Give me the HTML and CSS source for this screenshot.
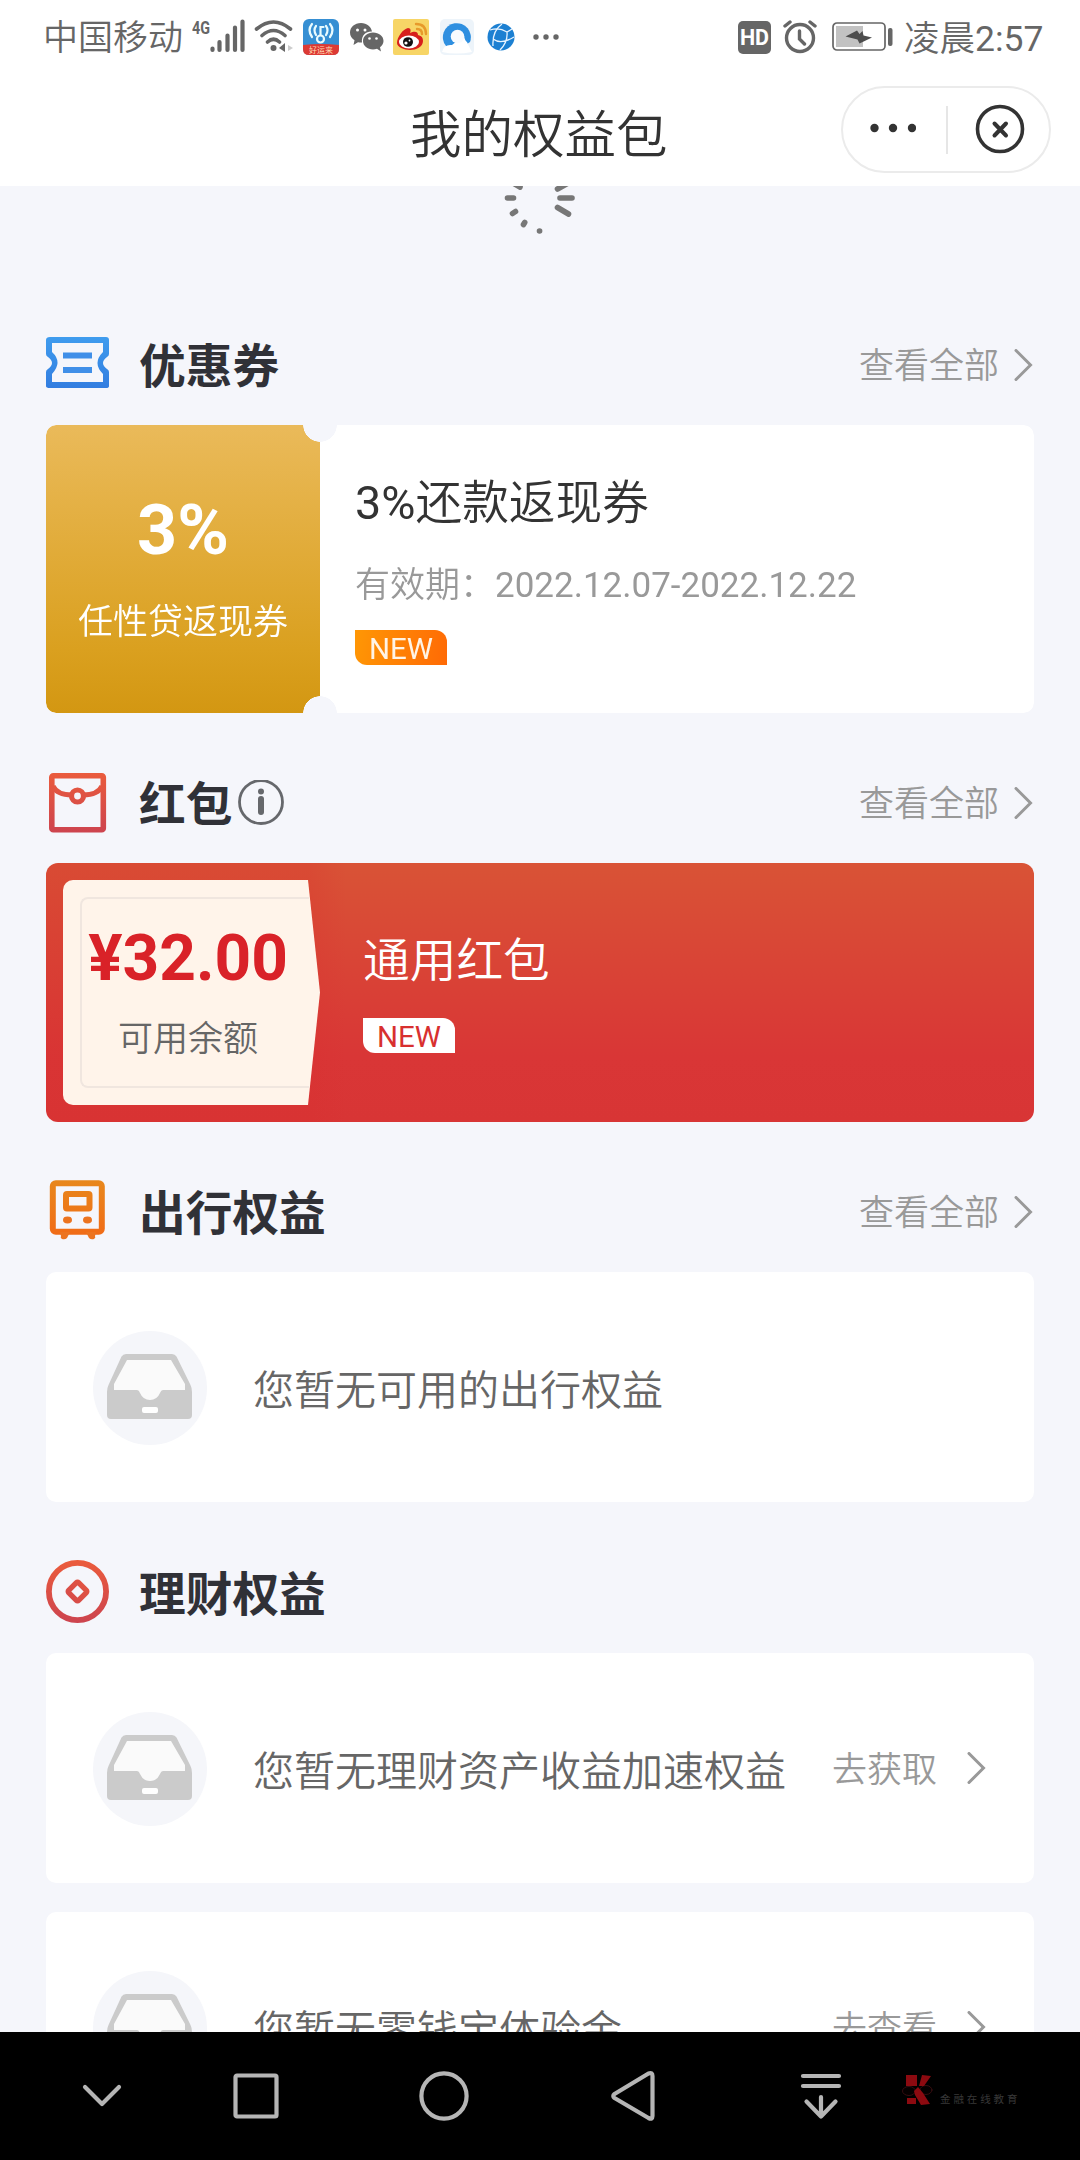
FILE: index.html
```html
<!DOCTYPE html>
<html lang="zh-CN">
<head>
<meta charset="utf-8">
<title>我的权益包</title>
<link rel="stylesheet" href="styles.css">
</head>
<body>
<svg class="defs" width="0" height="0" aria-hidden="true">
  <defs>
    <linearGradient id="blue" x1="0" y1="0" x2="0" y2="1"><stop offset="0" stop-color="#3f9cee"/><stop offset="1" stop-color="#327de0"/></linearGradient>
    <linearGradient id="red" gradientUnits="userSpaceOnUse" x1="0" y1="0" x2="0" y2="64"><stop offset="0" stop-color="#eb5c3c"/><stop offset="1" stop-color="#cc434f"/></linearGradient>
    <linearGradient id="orange" gradientUnits="userSpaceOnUse" x1="0" y1="0" x2="0" y2="64"><stop offset="0" stop-color="#e8881c"/><stop offset="1" stop-color="#f26716"/></linearGradient>
    <symbol id="arrow" viewBox="0 0 20 36"><path d="M2 1.500 16.500 16 2 30.500" fill="none" stroke="#999" stroke-width="3" stroke-linecap="round"/></symbol>
    <symbol id="tray" viewBox="0 0 114 114">
      <circle cx="57" cy="57" r="57" fill="#f5f6fa"/>
      <path d="M33 23H79Q82 23 83.500 25.500L97.500 54Q99 57 99 61V84Q99 88 95 88H18Q14 88 14 84V61Q14 57 15.500 54L28.500 25.500Q30 23 33 23Z" fill="#cbcbcb"/>
      <path d="M34 29H78L92 53V59H70Q68 59 67 62Q64 69 57 69Q50 69 47 62Q46 59 44 59H21V53Z" fill="#fafafa"/>
      <rect x="49" y="76" width="16" height="6" rx="2" fill="#fff"/>
    </symbol>
  </defs>
</svg>

<div class="screen">
  <header class="top">
    <div class="status">
      <span class="carrier">中国移动</span>
      <svg class="signal" width="54" height="40" viewBox="0 0 54 40">
        <text x="0" y="17" class="net" textLength="18" lengthAdjust="spacingAndGlyphs">4G</text>
        <path d="M20.500 33v-1.500M27.500 33v-8M35.500 33V18.500M43 33V10.500M50.500 33V4.500" stroke="#666" stroke-width="4.200" stroke-linecap="round"/>
      </svg>
      <svg class="wifi" width="40" height="40" viewBox="0 0 40 40" fill="none" stroke="#666" stroke-width="3.600" stroke-linecap="round">
        <path d="M2.500 12Q19.500-2 36.500 12M8 18.500Q19.500 8.500 31 18.500M13.500 25Q19.500 19.500 25.500 25"/>
        <circle cx="19.500" cy="31" r="3" fill="#666" stroke="none"/>
        <path d="M31 26v9l-6-4z" fill="#666" stroke="none"/><path d="M34 28v6l5-3z" fill="#ccc" stroke="none"/>
      </svg>
      <svg class="app-key" width="36" height="36" viewBox="0 0 36 36">
        <rect width="36" height="36" rx="6" fill="#368fd3"/>
        <path d="M0 26Q18 24 36 26v4q0 6-6 6H6q-6 0-6-6z" fill="#dd3a34"/>
        <g fill="none" stroke="#e9fbff" stroke-width="2.200" stroke-linecap="round"><circle cx="17.500" cy="20" r="3.500"/><path d="M17.500 16V8h3M13 7q-3 4 0 9M9 5q-5 6 0 13M23 7q3 4 0 9M27 5q5 6 0 13"/></g>
        <text x="18" y="34" text-anchor="middle" class="app-label">好运来</text>
      </svg>
      <svg class="wechat" width="36" height="36" viewBox="0 0 36 36" fill="#666">
        <path d="M12 4C5.500 4 1 8.400 1 13.500c0 3.500 1.800 6 4.500 7.800L4.500 26l4.500-2.800q2 .5 4 .4c-1-8 5-11.500 10-11C22 7.500 18 4 12 4z"/>
        <path d="M24 13.500c-5.500 0-10 3.600-10 8.500s4.500 8.500 10 8.500q2 0 4-.7l4 2.700-1-4.200c2-1.500 3.500-3.700 3.500-6.300 0-4.900-4.500-8.500-10.500-8.500z"/>
        <g fill="#fff"><circle cx="8.500" cy="11" r="1.500"/><circle cx="16" cy="11" r="1.500"/><circle cx="20.500" cy="19.500" r="1.300"/><circle cx="27.500" cy="19.500" r="1.300"/></g>
      </svg>
      <svg class="weibo" width="36" height="36" viewBox="0 0 36 36">
        <rect width="36" height="36" rx="2" fill="#f7d566"/>
        <path d="M4 24C4 18 10 10 15 9c3 0 3 3 2 5 4-2 8-2 8 2 4 1 5 3 5 6 0 6-7 9-13 9S4 28 4 24z" fill="#d71f1c"/>
        <ellipse cx="16" cy="23" rx="10" ry="6.500" fill="#fff"/><ellipse cx="15" cy="23" rx="5" ry="4.800" fill="#111"/><circle cx="13" cy="24" r="1.600" fill="#fff"/><circle cx="16.500" cy="21.500" r=".9" fill="#fff"/>
        <path d="M23 5q10 0 10 10M24 10q5 0 5 5" fill="none" stroke="#e79a2b" stroke-width="2.400" stroke-linecap="round"/>
      </svg>
      <svg class="browser" width="34" height="36" viewBox="0 0 34 36">
        <rect width="34" height="36" rx="5" fill="#edf4fa"/>
        <path d="M6 27A14 14 0 1 1 30 23L24 27L12 28Z" fill="#2e8fe0"/>
        <path d="M2 33Q4 25 12 26L17 22 24 17Q25 22 27 23Q29 28 32 33Q16 36 2 33z" fill="#fff"/>
        <circle cx="17.500" cy="17.500" r="6.800" fill="#f8fbfe"/>
      </svg>
      <svg class="globe" width="28" height="28" viewBox="0 0 28 28">
        <circle cx="14" cy="14" r="13.500" fill="#1c80d2"/>
        <path d="M3 7Q12 4 20 9Q21 19 13 27M15 1Q5 8 6 23M6 16Q14 22 27 14M20 9 25 6" fill="none" stroke="#e8f4ff" stroke-width="1.300"/>
      </svg>
      <svg class="more-apps" width="28" height="8" viewBox="0 0 28 8" fill="#666"><circle cx="4" cy="4" r="2.700"/><circle cx="14" cy="4" r="2.700"/><circle cx="24" cy="4" r="2.700"/></svg>
      <span class="hd">HD</span>
      <svg class="alarm" width="34" height="34" viewBox="0 0 34 34" fill="none" stroke="#666" stroke-width="3.400" stroke-linecap="round">
        <circle cx="17" cy="18" r="13.500"/><path d="M16.500 11v8l5 5M2 6l5-4M32 6l-5-4"/>
      </svg>
      <svg class="battery" width="62" height="30" viewBox="0 0 62 30">
        <rect x="1" y="1" width="52" height="27" rx="4" fill="none" stroke="#666" stroke-width="1.700"/>
        <rect x="4" y="4" width="27" height="21" fill="#c2c2c2"/>
        <path d="M13.500 14.500 25 8.500 27.500 12 30.500 9 31.500 13.500 40 15.500 27.500 21.500 25.500 17.500z" fill="#4d4d4d"/>
        <rect x="56" y="6" width="4.500" height="18" rx="2" fill="#666"/>
      </svg>
      <span class="clock">凌晨<span class="latin">2:57</span></span>
    </div>
    <div class="titlebar">
      <h1 class="title">我的权益包</h1>
      <div class="capsule">
        <svg class="capsule-dots" width="46" height="10" viewBox="0 0 46 10" fill="#333"><circle cx="4.500" cy="5" r="4.200"/><circle cx="23" cy="5" r="4.200"/><circle cx="42" cy="5" r="4.200"/></svg>
        <span class="capsule-line"></span>
        <svg class="capsule-close" width="50" height="50" viewBox="0 0 50 50" fill="none" stroke="#333" stroke-linecap="round"><circle cx="25" cy="25" r="22.500" stroke-width="3.600"/><path d="m19.500 19.500 11.500 12M31 19.500l-11.500 12" stroke-width="4"/></svg>
      </div>
    </div>
  </header>

  <main class="content">
    <svg class="spinner" width="74" height="50" viewBox="0 0 74 50" stroke="#777" stroke-linecap="round" stroke-width="5.600">
      <path d="M57 12h12M54.500 21.500l11 6.500M54.500 3 67-4M17 1 10-3M4.500 12h6M9.500 27.500l3-2M20.500 38.500l1.200-2M36.500 45h.1"/>
    </svg>

    <section class="block">
      <div class="head">
        <svg class="icon" width="64" height="64" viewBox="0 0 64 64">
          <path d="M4 4H60Q63 4 63 7V21Q63 23 61 24Q53 30 61 36Q63 37 63 39V53Q63 55 60 55H4Q0 55 0 53V39Q0 37 2 36Q10 30 2 24Q0 23 0 21V7Q0 4 4 4ZM6 10V19Q17 29 6 41V49H57V41Q46 30 57 19V10Z" fill="url(#blue)" fill-rule="evenodd"/>
          <path d="M17 19.500h29v6H17zM17 34h29v6H17z" fill="#408fe8"/>
        </svg>
        <h2 class="name">优惠券</h2>
        <a class="all">查看全部<svg width="20" height="36"><use href="#arrow"/></svg></a>
      </div>
      <article class="coupon">
        <div class="coupon-face"><strong class="rate">3%</strong><span class="kind">任性贷返现券</span></div>
        <div class="coupon-info">
          <h3 class="coupon-title"><span class="latin">3%</span>还款返现券</h3>
          <p class="valid">有效期：<span class="latin">2022.12.07-2022.12.22</span></p>
          <span class="new new-orange">NEW</span>
        </div>
      </article>
    </section>

    <section class="block">
      <div class="head">
        <svg class="icon" width="64" height="64" viewBox="0 0 64 64" fill="none" stroke="url(#red)">
          <rect x="5.800" y="4.800" width="51.500" height="54" rx="1.500" stroke-width="5.600"/>
          <path d="M7 15Q11 24 26 24M56 15Q52 24 37 24" stroke-width="5"/><circle cx="31.500" cy="25" r="6" stroke-width="5.200"/>
        </svg>
        <h2 class="name">红包</h2>
        <svg class="info" width="46" height="46" viewBox="0 0 46 46"><circle cx="23" cy="22" r="21.500" fill="none" stroke="#66686c" stroke-width="2.800"/><circle cx="23" cy="11.500" r="3" fill="#66686c"/><path d="M23 19v13" stroke="#66686c" stroke-width="6" stroke-linecap="round"/></svg>
        <a class="all">查看全部<svg width="20" height="36"><use href="#arrow"/></svg></a>
      </div>
      <article class="packet">
        <div class="ticket"><div class="ticket-line"></div><strong class="amount">¥32.00</strong><span class="balance">可用余额</span></div>
        <div class="packet-info"><h3 class="packet-title">通用红包</h3><span class="new new-white">NEW</span></div>
      </article>
    </section>

    <section class="block travel">
      <div class="head">
        <svg class="icon" width="64" height="64" viewBox="0 0 64 64" fill="none" stroke="url(#orange)">
          <rect x="6.800" y="3.300" width="49" height="48.500" rx="3" stroke-width="6"/><rect x="20" y="14" width="23.500" height="14.500" rx="1" stroke-width="6"/>
          <g fill="#ec7420" stroke="none"><ellipse cx="21.500" cy="40" rx="4.500" ry="3.400"/><ellipse cx="41.500" cy="40" rx="4.500" ry="3.400"/><path d="M14 52h10l-3 6q-2 2-5 1-2-1-1-3zM50 52H40l3 6q2 2 5 1 2-1 1-3z"/></g>
        </svg>
        <h2 class="name">出行权益</h2>
        <a class="all">查看全部<svg width="20" height="36"><use href="#arrow"/></svg></a>
      </div>
      <article class="empty"><svg width="114" height="114"><use href="#tray"/></svg><p class="note">您暂无可用的出行权益</p></article>
    </section>

    <section class="block">
      <div class="head">
        <svg class="icon coin" width="64" height="64" viewBox="0 0 64 64" fill="none" stroke="url(#red)"><circle cx="31.500" cy="31.500" r="28.600" stroke-width="5.800"/><rect x="24.500" y="24.500" width="14" height="14" rx="1.500" transform="rotate(45 31.500 31.500)" stroke-width="5.400"/></svg>
        <h2 class="name">理财权益</h2>
      </div>
      <article class="empty"><svg width="114" height="114"><use href="#tray"/></svg><p class="note">您暂无理财资产收益加速权益</p><a class="go">去获取<svg width="20" height="36"><use href="#arrow"/></svg></a></article>
      <article class="empty"><svg width="114" height="114"><use href="#tray"/></svg><p class="note">您暂无零钱宝体验金</p><a class="go">去查看<svg width="20" height="36"><use href="#arrow"/></svg></a></article>
    </section>
  </main>

  <nav class="nav">
    <svg width="60" height="60" viewBox="0 0 60 60"><path d="m13 21 17 17 17-17"/></svg>
    <svg width="60" height="60" viewBox="0 0 60 60"><rect x="9.500" y="9.500" width="41" height="41" rx="1.500"/></svg>
    <svg width="60" height="60" viewBox="0 0 60 60"><circle cx="30" cy="30" r="22.600"/></svg>
    <svg width="60" height="60" viewBox="0 0 60 60"><path d="M46.500 7.500Q50.500 6 50.500 10V50Q50.500 54 46.500 52L12.500 32Q10 30 12.500 28Z"/></svg>
    <svg width="60" height="60" viewBox="0 0 60 60"><path d="M12 10h36M12 20h36M30 31v19M15.500 35.500 30 50.500l14.500-15"/></svg>
    <div class="brand">
      <svg width="32" height="34" viewBox="0 0 32 34"><g stroke="#421014" stroke-width=".8" fill="#050000"><ellipse cx="7" cy="18" rx="6.500" ry="4.500"/><ellipse cx="24" cy="17" rx="6" ry="4.500"/></g><g fill="#8c0a10" stroke="none"><path d="M4 2h11v11H4zM20 2l9 1-7 10h-5zM5 25h9v6H5zM12 18l4-4 5 6 7 11-9 1-6-10z"/></g></svg>
      <span class="brand-name">金融在线教育</span>
    </div>
  </nav>
</div>
</body>
</html>
```
FILE: styles.css
```css
* { box-sizing: border-box; }
body {
  margin: 0;
  background: #f5f6fb;
  color: #333;
  font-family: Roboto, "Noto Sans CJK SC", sans-serif;
  font-weight: 350;
}
h1, h2, h3, p { margin: 0; font-weight: inherit; }
svg { display: block; flex: none; }
.defs { position: absolute; }
.latin { font-weight: 400; }

.screen { display: flex; flex-direction: column; width: 1080px; height: 2160px; overflow: hidden; }

/* status bar */
.top { flex: none; height: 186px; background: #fff; }
.status { display: flex; align-items: center; height: 74px; padding-left: 43px; color: #666; white-space: nowrap; }
.carrier, .clock { padding-top: 4px; font-size: 35px; line-height: 50px; }
.carrier { width: 149px; }
.net { font: 700 19px Roboto, sans-serif; fill: #666; }
.wifi { margin-left: 8px; }
.app-key { margin-left: 9px; }
.app-label { font: 8px "Noto Sans CJK SC", sans-serif; fill: #ffd9b0; }
.wechat { margin-left: 10px; }
.weibo { margin-left: 8px; }
.browser { margin-left: 11px; }
.globe { margin-left: 13px; }
.more-apps { margin-left: 17px; }
.hd { width: 33px; height: 33px; margin-left: 178px; border-radius: 5px; background: #666; color: #fff; font: 700 21.500px/34px Roboto, sans-serif; text-align: center; }
.alarm { margin-left: 12px; }
.battery { margin-left: 15px; }
.clock { margin-left: 10px; font-size: 35.500px; }

/* title bar */
.titlebar { display: grid; grid-template-columns: 1fr 210px; padding: 12px 29px 0 0; }
.title { padding: 4px 0 0 410px; font-size: 51.500px; line-height: 92px; }
.capsule { display: flex; align-items: center; height: 87px; padding-left: 27px; border: 2px solid #ebebeb; border-radius: 44px; }
.capsule-dots { margin-bottom: 3px; }
.capsule-line { width: 2px; height: 48px; margin-left: 30px; background: #e6e6e6; }
.capsule-close { margin: 0 0 2px 27px; }

/* page */
.content { flex: 1; min-height: 0; overflow: hidden; padding: 0 46px; }
.spinner { margin: 0 auto 99px 457px; fill: none; }
.block { margin-bottom: 60px; }
.travel { margin-bottom: 61px; }
.head { display: flex; align-items: center; height: 60px; margin-bottom: 30px; }
.icon { margin-right: 29px; }
.coin { margin-bottom: 2px; }
.name { padding-top: 4px; color: #303137; font-size: 46.700px; font-weight: 700; line-height: 60px; }
.info { margin-left: 6px; }
.all { display: flex; align-items: center; margin-left: auto; padding-top: 3px; color: #999; font-size: 35px; line-height: 50px; gap: 15px; }

.coupon { display: flex; height: 288px; border-radius: 10px; background: #fff;
  -webkit-mask: radial-gradient(circle 17px at 274px 0, transparent 16.500px, #000 17px), radial-gradient(circle 17px at 274px 288px, transparent 16.500px, #000 17px);
  -webkit-mask-composite: source-in;
  mask-composite: intersect; }
.coupon-face { display: flex; flex-direction: column; align-items: center; width: 274px; padding-top: 63px; border-radius: 10px 0 0 10px; background: linear-gradient(#eaba5a, #daa01f 78%, #d39712); color: #fff; }
.rate { font-size: 70px; font-weight: 700; line-height: 84px; }
.kind { margin-top: 26px; font-size: 35px; line-height: 50px; }
.coupon-info { padding: 48px 0 0 35px; }
.coupon-title { font-size: 46.700px; line-height: 60px; }
.valid { margin-top: 28px; color: #999; font-size: 35px; line-height: 50px; }
.new { display: block; height: 35px; border-radius: 0 12px 0 12px; font-size: 29.500px; font-weight: 400; line-height: 38px; text-align: center; }
.new-orange { width: 92px; margin-top: 19px; background: linear-gradient(100deg, #ff9705, #ff6a05); color: #fff4e6; }
.new-white { width: 92px; margin-top: 27px; background: #fff; color: #d8302f; }

.packet { display: flex; height: 259px; padding: 17px; border-radius: 12px; background: linear-gradient(90deg, #d92b2b33, #d92b2b33 265px, transparent 300px), linear-gradient(#d95336, #d93636 75%, #d83535); }
.ticket { position: relative; display: flex; flex-direction: column; align-items: center; width: 257px; height: 225px; padding: 46px 7px 0 0; border-radius: 10px 0 0 10px; background: #fff4ea; clip-path: polygon(0 0, 245px 0, 257px 50%, 245px 100%, 0 100%); }
.ticket-line { position: absolute; inset: 17px 11px 17px 17px; border: 2px solid #f0e6df; border-right: 0; border-radius: 8px 0 0 8px; }
.amount { color: #d92228; font-size: 64px; font-weight: 700; line-height: 66px; }
.balance { margin-top: 23px; color: #666; font-size: 35px; line-height: 50px; }
.packet-info { padding: 51px 0 0 43px; }
.packet-title { color: #fff; font-size: 46.700px; line-height: 60px; }

.empty { display: flex; align-items: center; height: 230px; margin-bottom: 29px; padding: 2px 47px 0; border-radius: 10px; background: #fff; }
.note { margin-left: 46px; padding-top: 5px; color: #666; font-size: 41px; line-height: 60px; white-space: nowrap; }
.go { display: flex; align-items: center; justify-content: space-between; width: 155px; margin-left: auto; padding-top: 4px; color: #999; font-size: 35px; line-height: 50px; }
.go svg { margin-bottom: 2px; }

/* system navigation */
.nav { display: grid; flex: none; grid-template-columns: 154px 188px 188px 189px 111px 1fr; align-items: center; height: 128px; padding-left: 72px; background: #000; fill: none; stroke: #b5b5b5; stroke-width: 4.200; stroke-linecap: round; stroke-linejoin: round; }
.brand { display: flex; align-items: center; gap: 6px; margin-top: -12px; }
.brand-name { padding-top: 20px; color: #383838; font-size: 10.500px; font-weight: 400; letter-spacing: 2.900px; line-height: 16px; }
```
